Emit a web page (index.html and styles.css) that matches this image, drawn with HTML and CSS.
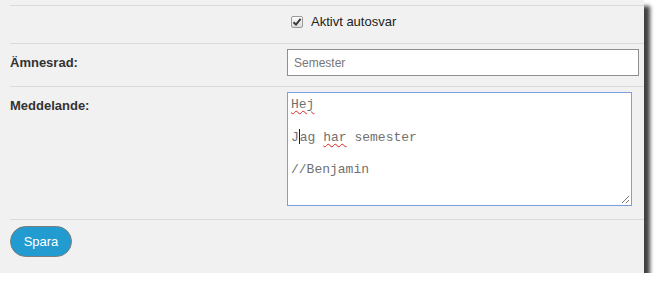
FILE: index.html
```html
<!DOCTYPE html>
<html>
<head>
    <title>Autosvar</title>
    <link rel="stylesheet" href="styles.css">
</head>
<body>
    <div class="panel">
        <div class="row row-check">
            <div></div>
            <label class="check">
                <span class="check-box">
                    <svg width="10" height="10" viewBox="0 0 10 10"><path d="M1.5 5.2 L4 7.6 L8.6 1.8" fill="none" stroke="#3a3a3a" stroke-width="2"/></svg>
                </span>
                Aktivt autosvar
            </label>
        </div>

        <div class="row row-subject">
            <label class="field-label" for="subject">Ämnesrad:</label>
            <input type="text" id="subject" class="text-input" placeholder="Semester" />
        </div>

        <div class="row row-message">
            <div class="field-label">Meddelande:</div>
            <div class="message-box">
                <div class="message-line"><span class="misspelled">Hej</span></div>
                <div class="message-line">&nbsp;</div>
                <div class="message-line">J<span class="caret"></span>ag <span class="misspelled">har</span> semester</div>
                <div class="message-line">&nbsp;</div>
                <div class="message-line">//Benjamin</div>
                <svg class="grip" width="9" height="9" viewBox="0 0 9 9"><path d="M8 1 L1 8 M8 5 L5 8" stroke="#777" stroke-width="1"/></svg>
            </div>
        </div>

        <div class="row row-actions">
            <button type="button" class="btn-save">Spara</button>
        </div>
    </div>
</body>
</html>
```

FILE: styles.css
```css
body {
    margin: 0;
    background: white;
    font-family: Arial, "Liberation Sans", sans-serif;
}
.panel {
    width: 644px;
    height: 273px;
    box-sizing: border-box;
    padding-top: 5px;
    background-color: #f1f1f1;
    box-shadow: 6px 6px 4px rgba(0,0,0,0.75);
}
.row {
    display: grid;
    grid-template-columns: 277px 1fr;
    margin-left: 10px;
    padding-right: 5px;
    border-top: 1px solid #dadada;
}
.row-check {
    height: 37px;
}
.row-subject {
    padding-top: 5px;
    padding-bottom: 10px;
}
.row-message {
    padding-top: 5px;
    padding-bottom: 13px;
}
.row-actions {
    display: block;
    padding-top: 6px;
}
.field-label {
    padding-top: 6px;
    font-size: 13px;
    line-height: 15px;
    font-weight: bold;
    color: #333;
}
.check {
    display: flex;
    align-items: center;
    gap: 8px;
    padding-left: 4px;
    padding-top: 8px;
    height: 15px;
    font-size: 13px;
    color: #222;
}
.check-box {
    display: flex;
    align-items: center;
    justify-content: center;
    width: 10px;
    height: 10px;
    border: 1px solid #9a9a9a;
    border-radius: 2px;
    background: linear-gradient(#fdfdfd, #dcdcdc);
}
.text-input {
    width: 352px;
    height: 27px;
    box-sizing: border-box;
    margin: 0;
    padding: 0 6px;
    border: 1px solid #8f8f8f;
    background: white;
    font-family: Arial, "Liberation Sans", sans-serif;
    font-size: 12px;
}
.text-input::placeholder {
    color: #777;
}
.message-box {
    position: relative;
    width: 345px;
    height: 114px;
    box-sizing: border-box;
    padding: 4px 3px;
    border: 1px solid #7ca0df;
    background: white;
    font-family: "Courier New", "Liberation Mono", monospace;
    font-size: 13px;
    line-height: 16px;
    color: #707070;
}
.misspelled {
    text-decoration: underline wavy #e02020;
    text-decoration-thickness: 1px;
    text-underline-offset: 2px;
}
.caret {
    display: inline-block;
    width: 0;
    height: 15px;
    border-left: 1px solid #222;
    vertical-align: -3px;
}
.grip {
    position: absolute;
    right: 1px;
    bottom: 1px;
}
.btn-save {
    width: 62px;
    height: 31px;
    padding: 0;
    border: 1px solid #7d7d7d;
    border-radius: 16px;
    background-color: #229bd0;
    color: white;
    font-family: Arial, "Liberation Sans", sans-serif;
    font-size: 13px;
    cursor: pointer;
}
```
